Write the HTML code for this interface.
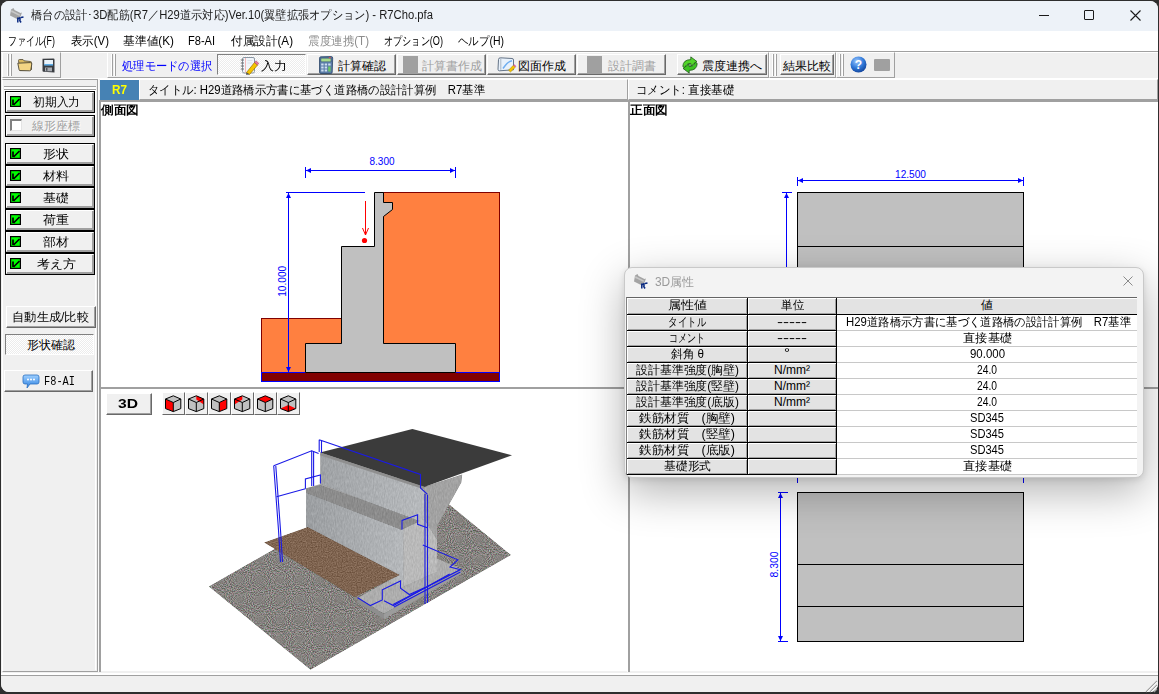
<!DOCTYPE html>
<html><head><meta charset="utf-8"><style>
html,body{margin:0;padding:0;}
body{width:1159px;height:694px;overflow:hidden;background:#2e2e2e;position:relative;font-family:"Liberation Sans",sans-serif;}
.a{position:absolute;}
.t{white-space:nowrap;}
.fit{display:inline-block;white-space:nowrap;transform-origin:0 50%;}
svg{position:absolute;overflow:visible;}
</style></head>
<body>
<div class="a" style="left:1px;top:1px;width:1157px;height:691px;background:#F0F0F0;border-radius:8px;overflow:hidden;"></div>
<div class="a" style="left:1px;top:1px;width:1157px;height:30px;background:#EDF2F8;border-radius:8px 8px 0 0;"></div>
<svg style="left:8px;top:7px" width="16" height="16" viewBox="0 0 16 16"><path d="M3 2.5 L5.5 1 L6.5 3 L12.5 6 L14 5.5 L12.5 9.5 L10 12.5 L2 8.5 Z" fill="#a4a4a4"/><path d="M3.5 3 L6 4.5 L12 7.5 L11.5 9 L5.5 6 L3 5Z" fill="#c8c8c8"/><path d="M9.8 10.5 V15.5 M9.8 11.5 L12.5 11 M12 10 V13 M11.5 13 L13 15.5 M13 10.5 L15.5 10" stroke="#0a2a80" stroke-width="1.5" fill="none"/></svg>
<div class="a t" style="left:31px;top:6px;height:18px;line-height:18px;font-size:12px;color:#1a1a1a;font-weight:400;"><span class="fit" style="--w:402;transform:scaleX(0.9376)">橋台の設計･3D配筋(R7／H29道示対応)Ver.10(翼壁拡張オプション) - R7Cho.pfa</span></div>
<div class="a" style="left:1039px;top:15px;width:10px;height:1px;background:#1a1a1a;"></div>
<div class="a" style="left:1084px;top:10px;width:10px;height:10px;border:1px solid #1a1a1a;box-sizing:border-box;border-radius:1px;"></div>
<svg style="left:1130px;top:10px" width="11" height="11" viewBox="0 0 11 11"><path d="M0.5 0.5 L10.5 10.5 M10.5 0.5 L0.5 10.5" stroke="#1a1a1a" stroke-width="1.1"/></svg>
<div class="a" style="left:1px;top:31px;width:1157px;height:20px;background:#FFFFFF;"></div>
<div class="a t" style="left:8px;top:33px;height:16px;line-height:16px;font-size:12px;color:#000;font-weight:400;"><span class="fit" style="--w:47;transform:scaleX(0.7422)">ファイル(F)</span></div>
<div class="a t" style="left:71px;top:33px;height:16px;line-height:16px;font-size:12px;color:#000;font-weight:400;"><span class="fit" style="--w:38;transform:scaleX(0.9500)">表示(V)</span></div>
<div class="a t" style="left:123px;top:33px;height:16px;line-height:16px;font-size:12px;color:#000;font-weight:400;"><span class="fit" style="--w:51;transform:scaleX(0.9808)">基準値(K)</span></div>
<div class="a t" style="left:188px;top:33px;height:16px;line-height:16px;font-size:12px;color:#000;font-weight:400;"><span class="fit" style="--w:27;transform:scaleX(0.9201)">F8-AI</span></div>
<div class="a t" style="left:231px;top:33px;height:16px;line-height:16px;font-size:12px;color:#000;font-weight:400;"><span class="fit" style="--w:62;transform:scaleX(0.9688)">付属設計(A)</span></div>
<div class="a t" style="left:308px;top:33px;height:16px;line-height:16px;font-size:12px;color:#8c8c8c;font-weight:400;"><span class="fit" style="--w:61;transform:scaleX(0.9632)">震度連携(T)</span></div>
<div class="a t" style="left:384px;top:33px;height:16px;line-height:16px;font-size:12px;color:#000;font-weight:400;"><span class="fit" style="--w:59;transform:scaleX(0.7630)">オプション(O)</span></div>
<div class="a t" style="left:458px;top:33px;height:16px;line-height:16px;font-size:12px;color:#000;font-weight:400;"><span class="fit" style="--w:46;transform:scaleX(0.8733)">ヘルプ(H)</span></div>
<div class="a" style="left:1px;top:51px;width:1157px;height:1px;background:#A0A0A0;"></div>
<div class="a" style="left:1px;top:52px;width:1157px;height:1px;background:#FFFFFF;"></div>
<div class="a" style="left:2px;top:52px;width:59px;height:26px;background:#F0F0F0;border-top:1px solid #FFFFFF;border-left:1px solid #FFFFFF;border-right:1px solid #A0A0A0;border-bottom:1px solid #A0A0A0;box-sizing:border-box;"></div>
<div class="a" style="left:7px;top:54px;width:1px;height:22px;background:#FFFFFF;"></div>
<div class="a" style="left:8px;top:54px;width:1px;height:22px;background:#A0A0A0;"></div>
<div class="a" style="left:10px;top:54px;width:1px;height:22px;background:#FFFFFF;"></div>
<div class="a" style="left:11px;top:54px;width:1px;height:22px;background:#A0A0A0;"></div>
<svg style="left:17px;top:58px" width="16" height="14" viewBox="0 0 16 14">
<path d="M1.5 2.5 Q1.5 1.5 2.5 1.5 L6 1.5 L7 2.8 L13.5 3.5 Q14.5 3.6 14.5 4.6 L14.5 11.5 L3 12.5 Z" fill="#d9b860" stroke="#5f5640" stroke-width="0.9"/>
<path d="M0.8 5.2 L13.2 4.6 Q15.2 4.6 14.8 6 L13.8 12 Q13.6 12.8 12.8 12.8 L3 12.6 Q2.3 12.6 2.1 11.8 Z" fill="#f4d584" stroke="#4a4535" stroke-width="0.9"/>
</svg>
<svg style="left:42px;top:58px" width="13" height="15" viewBox="0 0 13 15">
<path d="M0.5 0.8 L11.5 0.5 Q12.5 0.5 12.5 1.5 L12.5 14.5 L1.5 13.8 Q0.5 13.8 0.5 12.8Z" fill="#3a3d42"/>
<rect x="2.2" y="2" width="8.8" height="5.2" fill="#e9f3fb"/>
<rect x="2.2" y="6.2" width="8.8" height="1.3" fill="#3d9be0"/>
<rect x="3" y="9.5" width="7" height="3.8" fill="#a9adb3"/>
<rect x="4" y="10" width="1.5" height="2.8" fill="#50545a"/>
</svg>
<div class="a" style="left:107px;top:52px;width:662px;height:26px;background:#F0F0F0;border-top:1px solid #FFFFFF;border-left:1px solid #FFFFFF;border-right:1px solid #A0A0A0;border-bottom:1px solid #A0A0A0;box-sizing:border-box;"></div>
<div class="a" style="left:111px;top:54px;width:1px;height:22px;background:#FFFFFF;"></div>
<div class="a" style="left:112px;top:54px;width:1px;height:22px;background:#A0A0A0;"></div>
<div class="a" style="left:114px;top:54px;width:1px;height:22px;background:#FFFFFF;"></div>
<div class="a" style="left:115px;top:54px;width:1px;height:22px;background:#A0A0A0;"></div>
<div class="a t" style="left:122px;top:58px;height:16px;line-height:16px;font-size:12px;color:#0000FF;font-weight:400;"><span class="fit" style="--w:90;transform:scaleX(0.9375)">処理モードの選択</span></div>
<div class="a" style="left:217px;top:54px;width:89px;height:21px;background:#F7F7F7;border-top:1px solid #808080;border-left:1px solid #808080;border-right:1px solid #FFFFFF;border-bottom:1px solid #FFFFFF;box-sizing:border-box;background-image:conic-gradient(#FFFFFF 25%,#ECECEC 0 50%,#FFFFFF 0 75%,#ECECEC 0);background-size:2px 2px;"></div>
<div class="a" style="left:307px;top:54px;width:89px;height:21px;background:#F0F0F0;border-top:1px solid #FFFFFF;border-left:1px solid #FFFFFF;border-right:1px solid #696969;border-bottom:1px solid #696969;box-sizing:border-box;box-shadow:inset -1px -1px 0 #A0A0A0;"></div>
<div class="a" style="left:397px;top:54px;width:89px;height:21px;background:#F0F0F0;border-top:1px solid #FFFFFF;border-left:1px solid #FFFFFF;border-right:1px solid #696969;border-bottom:1px solid #696969;box-sizing:border-box;box-shadow:inset -1px -1px 0 #A0A0A0;"></div>
<div class="a" style="left:487px;top:54px;width:89px;height:21px;background:#F0F0F0;border-top:1px solid #FFFFFF;border-left:1px solid #FFFFFF;border-right:1px solid #696969;border-bottom:1px solid #696969;box-sizing:border-box;box-shadow:inset -1px -1px 0 #A0A0A0;"></div>
<div class="a" style="left:577px;top:54px;width:89px;height:21px;background:#F0F0F0;border-top:1px solid #FFFFFF;border-left:1px solid #FFFFFF;border-right:1px solid #696969;border-bottom:1px solid #696969;box-sizing:border-box;box-shadow:inset -1px -1px 0 #A0A0A0;"></div>
<div class="a" style="left:677px;top:54px;width:90px;height:21px;background:#F0F0F0;border-top:1px solid #FFFFFF;border-left:1px solid #FFFFFF;border-right:1px solid #696969;border-bottom:1px solid #696969;box-sizing:border-box;box-shadow:inset -1px -1px 0 #A0A0A0;"></div>
<svg style="left:240px;top:57px" width="19" height="18" viewBox="0 0 19 18">
<rect x="2.5" y="0.5" width="12" height="15.5" rx="1.5" fill="#f1f5fa" stroke="#8a96a3"/>
<path d="M0.8 3 H4 M0.8 6 H4 M0.8 9 H4 M0.8 12 H4" stroke="#6f6f6f" stroke-width="1"/>
<path d="M5.5 1 V15.5" stroke="#f2a8a8" stroke-width="0.8"/>
<path d="M7.5 3.5 H12.5 M7.5 6 H12.5" stroke="#d5dde6" stroke-width="0.8"/>
<path d="M6.5 15.5 L14.5 5.5 L17.5 8 L9.5 17.5 Z" fill="#f5c400" stroke="#9a7400" stroke-width="0.7"/>
<path d="M14.5 5.5 L16 3.8 L18.8 6.3 L17.5 8Z" fill="#e8789a" stroke="#9a4060" stroke-width="0.5"/>
<path d="M6.5 15.5 L6 17.8 L9.5 17.5Z" fill="#444"/>
</svg>
<div class="a t" style="left:261px;top:58px;height:16px;line-height:16px;font-size:12px;color:#000;font-weight:400;"><span class="fit" style="--w:26;transform:scaleX(1.0833)">入力</span></div>
<svg style="left:318px;top:56px" width="16" height="18" viewBox="0 0 16 18">
<path d="M1.5 2.2 Q1.5 0.8 3 0.8 L13.2 0.5 Q14.7 0.5 14.7 2 L14.2 16.2 Q14.2 17.5 12.8 17.5 L3 17.5 Q1.5 17.5 1.5 16Z" fill="#5a7ca6" stroke="#2a4464" stroke-width="0.8"/>
<path d="M2.5 1.5 H13.5 V6 H2.5Z" fill="#3a5a80"/>
<rect x="3.2" y="2.5" width="9.5" height="3" fill="#a9dc8c"/>
<rect x="10.8" y="1.2" width="2" height="1" fill="#e84848"/>
<g fill="#cfe0f2"><rect x="3.2" y="7.5" width="2.4" height="2"/><rect x="6.7" y="7.5" width="2.4" height="2"/><rect x="10.2" y="7.5" width="2.4" height="2"/>
<rect x="3.2" y="10.5" width="2.4" height="2"/><rect x="6.7" y="10.5" width="2.4" height="2"/><rect x="3.2" y="13.5" width="2.4" height="2"/><rect x="6.7" y="13.5" width="2.4" height="2"/></g>
<rect x="10.2" y="10.5" width="2.4" height="5" fill="#6cc864"/>
</svg>
<div class="a t" style="left:338px;top:58px;height:16px;line-height:16px;font-size:12px;color:#000;font-weight:400;"><span class="fit" style="--w:48;transform:scaleX(1.0000)">計算確認</span></div>
<div class="a" style="left:403px;top:56px;width:15px;height:17px;background:#A0A0A0;"></div>
<div class="a t" style="left:422px;top:58px;height:16px;line-height:16px;font-size:12px;color:#A0A0A0;font-weight:400;"><span class="fit" style="--w:60;transform:scaleX(1.0000)">計算書作成</span></div>
<svg style="left:497px;top:57px" width="20" height="15" viewBox="0 0 20 15">
<path d="M1.5 2.5 Q1.5 0.8 3.5 0.8 L15 1.5 Q16.5 1.5 16.5 3 L16.5 12.8 L2.5 13.8 Q1 13.8 1 12.3 Z" fill="#e8f1fb" stroke="#55657a" stroke-width="0.9"/>
<path d="M3.8 1 V12.8" stroke="#a9b6c4" stroke-width="1"/>
<path d="M6 11.5 Q8.5 8 10 6.5 Q12 4.5 15 3.8" stroke="#70aef0" stroke-width="1.5" fill="none"/>
<path d="M11.5 13.2 L16.3 8.3 L18.3 10.3 L13.5 15 Z" fill="#f5c400" stroke="#9a7a00" stroke-width="0.5"/>
<path d="M16.3 8.3 L17.3 7.3 L19.3 9.3 L18.3 10.3Z" fill="#e060a0"/>
</svg>
<div class="a t" style="left:518px;top:58px;height:16px;line-height:16px;font-size:12px;color:#000;font-weight:400;"><span class="fit" style="--w:48;transform:scaleX(1.0000)">図面作成</span></div>
<div class="a" style="left:587px;top:56px;width:15px;height:17px;background:#A0A0A0;"></div>
<div class="a t" style="left:608px;top:58px;height:16px;line-height:16px;font-size:12px;color:#A0A0A0;font-weight:400;"><span class="fit" style="--w:48;transform:scaleX(1.0000)">設計調書</span></div>
<svg style="left:681px;top:56px" width="18" height="18" viewBox="0 0 18 18">
<path d="M1.8 10.5 Q2 3.8 9.8 3.6 L9.8 0.9 L16 5.6 L9.8 10.2 L9.8 7.4 Q5.2 7.4 3.8 11.8 Z" fill="#52d62a" stroke="#1d5418" stroke-width="0.8" stroke-linejoin="round"/>
<path d="M16.2 7.5 Q16 14.2 8.2 14.4 L8.2 17.1 L2 12.4 L8.2 7.8 L8.2 10.6 Q12.8 10.6 14.2 6.2 Z" fill="#3cc422" stroke="#1d5418" stroke-width="0.8" stroke-linejoin="round"/>
</svg>
<div class="a t" style="left:702px;top:58px;height:16px;line-height:16px;font-size:12px;color:#000;font-weight:400;"><span class="fit" style="--w:60;transform:scaleX(1.0000)">震度連携へ</span></div>
<div class="a" style="left:769px;top:52px;width:67px;height:26px;background:#F0F0F0;border-top:1px solid #FFFFFF;border-left:1px solid #FFFFFF;border-right:1px solid #A0A0A0;border-bottom:1px solid #A0A0A0;box-sizing:border-box;"></div>
<div class="a" style="left:772px;top:54px;width:1px;height:22px;background:#FFFFFF;"></div>
<div class="a" style="left:773px;top:54px;width:1px;height:22px;background:#A0A0A0;"></div>
<div class="a" style="left:775px;top:54px;width:1px;height:22px;background:#FFFFFF;"></div>
<div class="a" style="left:776px;top:54px;width:1px;height:22px;background:#A0A0A0;"></div>
<div class="a" style="left:780px;top:54px;width:54px;height:21px;background:#F0F0F0;border-top:1px solid #FFFFFF;border-left:1px solid #FFFFFF;border-right:1px solid #696969;border-bottom:1px solid #696969;box-sizing:border-box;box-shadow:inset -1px -1px 0 #A0A0A0;"></div>
<div class="a t" style="left:783px;top:58px;height:16px;line-height:16px;font-size:12px;color:#000;font-weight:400;"><span class="fit" style="--w:48;transform:scaleX(1.0000)">結果比較</span></div>
<div class="a" style="left:836px;top:52px;width:59px;height:26px;background:#F0F0F0;border-top:1px solid #FFFFFF;border-left:1px solid #FFFFFF;border-right:1px solid #A0A0A0;border-bottom:1px solid #A0A0A0;box-sizing:border-box;"></div>
<div class="a" style="left:839px;top:54px;width:1px;height:22px;background:#FFFFFF;"></div>
<div class="a" style="left:840px;top:54px;width:1px;height:22px;background:#A0A0A0;"></div>
<div class="a" style="left:842px;top:54px;width:1px;height:22px;background:#FFFFFF;"></div>
<div class="a" style="left:843px;top:54px;width:1px;height:22px;background:#A0A0A0;"></div>
<svg style="left:850px;top:56px" width="17" height="17" viewBox="0 0 17 17">
<defs><radialGradient id="hg" cx="40%" cy="30%" r="70%"><stop offset="0" stop-color="#9cc8ff"/><stop offset="0.6" stop-color="#2f78d8"/><stop offset="1" stop-color="#1548a0"/></radialGradient></defs>
<circle cx="8.5" cy="8.5" r="8" fill="url(#hg)"/>
<text x="8.5" y="13" text-anchor="middle" font-family="Liberation Sans" font-weight="700" font-size="12" fill="#fff">?</text>
</svg>
<div class="a" style="left:874px;top:59px;width:16px;height:12px;background:#A0A0A0;border-radius:1px;"></div>
<div class="a" style="left:1px;top:78px;width:1157px;height:1px;background:#FFFFFF;"></div>
<div class="a" style="left:100px;top:79px;width:39px;height:1px;background:#FFFFFF;"></div>
<div class="a" style="left:100px;top:80px;width:39px;height:20px;background:#4682B4;"></div>
<div class="a t" style="left:112px;top:82px;height:16px;line-height:16px;font-size:12px;color:#FFFF00;font-weight:700;"><span class="fit" style="--w:15;transform:scaleX(0.9776)">R7</span></div>
<div class="a" style="left:139px;top:79px;width:489px;height:21px;background:#F0F0F0;border-top:1px solid #FFFFFF;border-left:1px solid #FFFFFF;border-right:1px solid #A0A0A0;border-bottom:1px solid #A0A0A0;box-sizing:border-box;"></div>
<div class="a t" style="left:148px;top:82px;height:16px;line-height:16px;font-size:12px;color:#000;font-weight:400;"><span class="fit" style="--w:337;transform:scaleX(0.9465)">タイトル: H29道路橋示方書に基づく道路橋の設計計算例　R7基準</span></div>
<div class="a" style="left:628px;top:79px;width:530px;height:21px;background:#F0F0F0;border-top:1px solid #FFFFFF;border-left:1px solid #FFFFFF;border-right:1px solid #A0A0A0;border-bottom:1px solid #A0A0A0;box-sizing:border-box;"></div>
<div class="a t" style="left:636px;top:82px;height:16px;line-height:16px;font-size:12px;color:#000;font-weight:400;"><span class="fit" style="--w:98;transform:scaleX(0.9545)">コメント: 直接基礎</span></div>
<div class="a" style="left:2px;top:79px;width:96px;height:593px;background:#F0F0F0;border-top:1px solid #A0A0A0;border-left:1px solid #FFFFFF;border-right:1px solid #A0A0A0;border-bottom:1px solid #A0A0A0;box-sizing:border-box;"></div>
<div class="a" style="left:95px;top:90px;width:1px;height:580px;background:#FFFFFF;"></div>
<div class="a" style="left:98px;top:79px;width:1px;height:593px;background:#FAFAFA;"></div>
<div class="a" style="left:4px;top:86px;width:92px;height:1px;background:#A0A0A0;"></div>
<div class="a" style="left:4px;top:87px;width:92px;height:2px;background:#FFFFFF;"></div>
<div class="a" style="left:4px;top:89px;width:92px;height:1px;background:#A0A0A0;"></div>
<div class="a" style="left:4px;top:90px;width:92px;height:1px;background:#FFFFFF;"></div>
<div class="a" style="left:5px;top:91px;width:90px;height:22px;background:#000;"></div>
<div class="a" style="left:6px;top:92px;width:88px;height:20px;background:#F0F0F0;border-top:1px solid #FFFFFF;border-left:1px solid #FFFFFF;border-right:1px solid #A0A0A0;border-bottom:1px solid #A0A0A0;box-sizing:border-box;box-shadow:inset -1px -1px 0 #A0A0A0;"></div>
<svg style="left:10px;top:96px" width="11" height="11" viewBox="0 0 11 11"><rect x="0.6" y="0.6" width="9.8" height="9.8" fill="#00FF00" stroke="#000" stroke-width="1.2"/><path d="M3 3.5 V9 M3.5 9 L9.5 3" stroke="#000" stroke-width="1.7" fill="none"/></svg>
<div class="a t" style="left:33px;top:94px;height:16px;line-height:16px;font-size:12px;color:#000;font-weight:400;"><span class="fit" style="--w:47;transform:scaleX(0.9792)">初期入力</span></div>
<div class="a" style="left:5px;top:115px;width:90px;height:22px;background:#000;"></div>
<div class="a" style="left:6px;top:116px;width:88px;height:20px;background:#F0F0F0;border-top:1px solid #FFFFFF;border-left:1px solid #FFFFFF;border-right:1px solid #A0A0A0;border-bottom:1px solid #A0A0A0;box-sizing:border-box;box-shadow:inset -1px -1px 0 #A0A0A0;"></div>
<div class="a" style="left:10px;top:119px;width:12px;height:12px;background:#FFFFFF;border-top:2px solid #808080;border-left:2px solid #808080;border-right:1px solid #E3E3E3;border-bottom:1px solid #E3E3E3;box-sizing:border-box;"></div>
<div class="a t" style="left:32px;top:118px;height:16px;line-height:16px;font-size:12px;color:#A0A0A0;font-weight:400;text-shadow:1px 1px 0 #fff;"><span class="fit" style="--w:48;transform:scaleX(1.0000)">線形座標</span></div>
<div class="a" style="left:5px;top:143px;width:90px;height:22px;background:#000;"></div>
<div class="a" style="left:6px;top:144px;width:88px;height:20px;background:#F0F0F0;border-top:1px solid #FFFFFF;border-left:1px solid #FFFFFF;border-right:1px solid #A0A0A0;border-bottom:1px solid #A0A0A0;box-sizing:border-box;box-shadow:inset -1px -1px 0 #A0A0A0;"></div>
<svg style="left:10px;top:148px" width="11" height="11" viewBox="0 0 11 11"><rect x="0.6" y="0.6" width="9.8" height="9.8" fill="#00FF00" stroke="#000" stroke-width="1.2"/><path d="M3 3.5 V9 M3.5 9 L9.5 3" stroke="#000" stroke-width="1.7" fill="none"/></svg>
<div class="a t" style="left:43px;top:146px;height:16px;line-height:16px;font-size:12px;color:#000;font-weight:400;"><span class="fit" style="--w:26;transform:scaleX(1.0833)">形状</span></div>
<div class="a" style="left:5px;top:165px;width:90px;height:22px;background:#000;"></div>
<div class="a" style="left:6px;top:166px;width:88px;height:20px;background:#F0F0F0;border-top:1px solid #FFFFFF;border-left:1px solid #FFFFFF;border-right:1px solid #A0A0A0;border-bottom:1px solid #A0A0A0;box-sizing:border-box;box-shadow:inset -1px -1px 0 #A0A0A0;"></div>
<svg style="left:10px;top:170px" width="11" height="11" viewBox="0 0 11 11"><rect x="0.6" y="0.6" width="9.8" height="9.8" fill="#00FF00" stroke="#000" stroke-width="1.2"/><path d="M3 3.5 V9 M3.5 9 L9.5 3" stroke="#000" stroke-width="1.7" fill="none"/></svg>
<div class="a t" style="left:43px;top:168px;height:16px;line-height:16px;font-size:12px;color:#000;font-weight:400;"><span class="fit" style="--w:26;transform:scaleX(1.0833)">材料</span></div>
<div class="a" style="left:5px;top:187px;width:90px;height:22px;background:#000;"></div>
<div class="a" style="left:6px;top:188px;width:88px;height:20px;background:#F0F0F0;border-top:1px solid #FFFFFF;border-left:1px solid #FFFFFF;border-right:1px solid #A0A0A0;border-bottom:1px solid #A0A0A0;box-sizing:border-box;box-shadow:inset -1px -1px 0 #A0A0A0;"></div>
<svg style="left:10px;top:192px" width="11" height="11" viewBox="0 0 11 11"><rect x="0.6" y="0.6" width="9.8" height="9.8" fill="#00FF00" stroke="#000" stroke-width="1.2"/><path d="M3 3.5 V9 M3.5 9 L9.5 3" stroke="#000" stroke-width="1.7" fill="none"/></svg>
<div class="a t" style="left:43px;top:190px;height:16px;line-height:16px;font-size:12px;color:#000;font-weight:400;"><span class="fit" style="--w:26;transform:scaleX(1.0833)">基礎</span></div>
<div class="a" style="left:5px;top:209px;width:90px;height:22px;background:#000;"></div>
<div class="a" style="left:6px;top:210px;width:88px;height:20px;background:#F0F0F0;border-top:1px solid #FFFFFF;border-left:1px solid #FFFFFF;border-right:1px solid #A0A0A0;border-bottom:1px solid #A0A0A0;box-sizing:border-box;box-shadow:inset -1px -1px 0 #A0A0A0;"></div>
<svg style="left:10px;top:214px" width="11" height="11" viewBox="0 0 11 11"><rect x="0.6" y="0.6" width="9.8" height="9.8" fill="#00FF00" stroke="#000" stroke-width="1.2"/><path d="M3 3.5 V9 M3.5 9 L9.5 3" stroke="#000" stroke-width="1.7" fill="none"/></svg>
<div class="a t" style="left:43px;top:212px;height:16px;line-height:16px;font-size:12px;color:#000;font-weight:400;"><span class="fit" style="--w:26;transform:scaleX(1.0833)">荷重</span></div>
<div class="a" style="left:5px;top:231px;width:90px;height:22px;background:#000;"></div>
<div class="a" style="left:6px;top:232px;width:88px;height:20px;background:#F0F0F0;border-top:1px solid #FFFFFF;border-left:1px solid #FFFFFF;border-right:1px solid #A0A0A0;border-bottom:1px solid #A0A0A0;box-sizing:border-box;box-shadow:inset -1px -1px 0 #A0A0A0;"></div>
<svg style="left:10px;top:236px" width="11" height="11" viewBox="0 0 11 11"><rect x="0.6" y="0.6" width="9.8" height="9.8" fill="#00FF00" stroke="#000" stroke-width="1.2"/><path d="M3 3.5 V9 M3.5 9 L9.5 3" stroke="#000" stroke-width="1.7" fill="none"/></svg>
<div class="a t" style="left:43px;top:234px;height:16px;line-height:16px;font-size:12px;color:#000;font-weight:400;"><span class="fit" style="--w:26;transform:scaleX(1.0833)">部材</span></div>
<div class="a" style="left:5px;top:253px;width:90px;height:22px;background:#000;"></div>
<div class="a" style="left:6px;top:254px;width:88px;height:20px;background:#F0F0F0;border-top:1px solid #FFFFFF;border-left:1px solid #FFFFFF;border-right:1px solid #A0A0A0;border-bottom:1px solid #A0A0A0;box-sizing:border-box;box-shadow:inset -1px -1px 0 #A0A0A0;"></div>
<svg style="left:10px;top:258px" width="11" height="11" viewBox="0 0 11 11"><rect x="0.6" y="0.6" width="9.8" height="9.8" fill="#00FF00" stroke="#000" stroke-width="1.2"/><path d="M3 3.5 V9 M3.5 9 L9.5 3" stroke="#000" stroke-width="1.7" fill="none"/></svg>
<div class="a t" style="left:37px;top:256px;height:16px;line-height:16px;font-size:12px;color:#000;font-weight:400;"><span class="fit" style="--w:39;transform:scaleX(1.0833)">考え方</span></div>
<div class="a" style="left:6px;top:306px;width:90px;height:22px;background:#F0F0F0;border-top:1px solid #FFFFFF;border-left:1px solid #FFFFFF;border-right:1px solid #696969;border-bottom:1px solid #696969;box-sizing:border-box;box-shadow:inset -1px -1px 0 #A0A0A0;"></div>
<div class="a t" style="left:12px;top:309px;height:16px;line-height:16px;font-size:12px;color:#000;font-weight:400;"><span class="fit" style="--w:77;transform:scaleX(1.0220)">自動生成/比較</span></div>
<div class="a" style="left:5px;top:334px;width:89px;height:21px;border-top:1px solid #808080;border-left:1px solid #808080;border-right:1px solid #FFFFFF;border-bottom:1px solid #FFFFFF;box-sizing:border-box;background-image:conic-gradient(#FFFFFF 25%,#ECECEC 0 50%,#FFFFFF 0 75%,#ECECEC 0);background-size:2px 2px;"></div>
<div class="a t" style="left:27px;top:337px;height:16px;line-height:16px;font-size:12px;color:#000;font-weight:400;"><span class="fit" style="--w:48;transform:scaleX(1.0000)">形状確認</span></div>
<div class="a" style="left:4px;top:370px;width:89px;height:22px;background:#F0F0F0;border-top:1px solid #FFFFFF;border-left:1px solid #FFFFFF;border-right:1px solid #696969;border-bottom:1px solid #696969;box-sizing:border-box;box-shadow:inset -1px -1px 0 #A0A0A0;"></div>
<svg style="left:22px;top:374px" width="18" height="15" viewBox="0 0 18 15">
<defs><linearGradient id="bb" x1="0" y1="0" x2="0" y2="1"><stop offset="0" stop-color="#9fd0ff"/><stop offset="1" stop-color="#2a7fe0"/></linearGradient></defs>
<path d="M3 1 H15 Q17 1 17 3 V8 Q17 10 15 10 H8 L5 14 L5.5 10 H3 Q1 10 1 8 V3 Q1 1 3 1Z" fill="url(#bb)" stroke="#2a6fc0" stroke-width="0.8"/>
<circle cx="6" cy="5.5" r="1" fill="#fff"/><circle cx="9" cy="5.5" r="1" fill="#fff"/><circle cx="12" cy="5.5" r="1" fill="#fff"/>
</svg>
<div class="a t" style="left:44px;top:374px;height:16px;line-height:16px;font-size:12px;color:#000;font-weight:400;font-family:'Liberation Mono',monospace;"><span class="fit" style="--w:31;transform:scaleX(0.8607)">F8-AI</span></div>
<div class="a" style="left:99px;top:100px;width:1059px;height:2px;background:#A0A0A0;"></div>
<div class="a" style="left:99px;top:100px;width:2px;height:572px;background:#A0A0A0;"></div>
<div class="a" style="left:101px;top:102px;width:526px;height:285px;background:#FFFFFF;"></div>
<div class="a" style="left:101px;top:389px;width:526px;height:282px;background:#FFFFFF;"></div>
<div class="a" style="left:99px;top:387px;width:529px;height:2px;background:#A0A0A0;"></div>
<div class="a" style="left:627px;top:102px;width:1px;height:570px;background:#FFFFFF;"></div>
<div class="a" style="left:628px;top:100px;width:2px;height:572px;background:#A0A0A0;"></div>
<div class="a" style="left:630px;top:102px;width:528px;height:285px;background:#FFFFFF;"></div>
<div class="a" style="left:630px;top:389px;width:528px;height:282px;background:#FFFFFF;"></div>
<div class="a" style="left:630px;top:387px;width:528px;height:2px;background:#A0A0A0;"></div>
<div class="a t" style="left:101px;top:103px;height:14px;line-height:14px;font-size:12px;color:#000;font-weight:700;"><span class="fit" style="--w:38;transform:scaleX(1.0556)">側面図</span></div>
<div class="a t" style="left:630px;top:103px;height:14px;line-height:14px;font-size:12px;color:#000;font-weight:700;"><span class="fit" style="--w:38;transform:scaleX(1.0556)">正面図</span></div>
<svg style="left:0;top:0" width="1159" height="694" viewBox="0 0 1159 694">
<defs>
<filter id="nz" x="0" y="0" width="100%" height="100%"><feTurbulence type="fractalNoise" baseFrequency="0.9" numOctaves="2" seed="3"/><feColorMatrix values="0 0 0 0 0.5  0 0 0 0 0.5  0 0 0 0 0.5  0 0 0 1.6 -0.55"/><feComposite in2="SourceGraphic" operator="in"/></filter>
</defs>
<!-- side view -->
<rect x="383.5" y="192.5" width="116" height="180" fill="#FF8040" stroke="#800000" stroke-width="1"/>
<rect x="261.5" y="318.5" width="80" height="54" fill="#FF8040" stroke="#800000" stroke-width="1"/>
<rect x="261.5" y="372.5" width="238" height="9" fill="#800000" stroke="#0000FF" stroke-width="1"/>
<path d="M374.5 192.5 H383.5 V202.5 H392.5 V209.5 L383.5 216.5 V343.5 H455.5 V372.5 H305.5 V343.5 H341.5 V246.5 H374.5 Z" fill="#C0C0C0" stroke="#000" stroke-width="1"/>
<path d="M305.5 170.5 H455.5 M305.5 167 V178 M455.5 167 V178 " stroke="#0000FF" stroke-width="1" fill="none"/><path d="M306 170.5 L311 168 V173Z M455 170.5 L450 168 V173Z" fill="#0000FF"/>
<path d="M286 192.5 H365 M288.5 192.5 V372.5 " stroke="#0000FF" stroke-width="1" fill="none"/><path d="M288.5 193 L286 198 H291Z M288.5 372 L286 367 H291Z" fill="#0000FF"/>
<text x="382" y="165" text-anchor="middle" font-family="Liberation Sans" font-size="11" fill="#0000FF" textLength="25" lengthAdjust="spacingAndGlyphs">8.300</text>
<text transform="translate(286.2,281.3) rotate(-90)" text-anchor="middle" font-family="Liberation Sans" font-size="11" fill="#0000FF" textLength="31" lengthAdjust="spacingAndGlyphs">10.000</text>
<path d="M365.5 201 V235 M365.5 235 L362.5 228 M365.5 235 L368.5 228" stroke="#FF0000" stroke-width="1" fill="none"/>
<circle cx="364.5" cy="240.5" r="2.6" fill="#FF0000"/>

<!-- front view (top right) -->
<rect x="797.5" y="192.5" width="226" height="200" fill="#C0C0C0" stroke="#000" stroke-width="1"/>
<path d="M797.5 246.5 H1023.5" stroke="#000"/>
<path d="M797.5 180.5 H1023.5 M797.5 177 V186 M1023.5 177 V186 " stroke="#0000FF" fill="none"/><path d="M798 180.5 L803 178 V183Z M1023 180.5 L1018 178 V183Z" fill="#0000FF"/>
<text x="910.5" y="178" text-anchor="middle" font-family="Liberation Sans" font-size="11" fill="#0000FF" textLength="31" lengthAdjust="spacingAndGlyphs">12.500</text>
<path d="M786.5 193 V380 M782 192.5 H792 " stroke="#0000FF" fill="none"/><path d="M786.5 193 L784 198 H789Z" fill="#0000FF"/>

<!-- bottom right view -->
<rect x="797.5" y="492.5" width="226" height="149" fill="#C0C0C0" stroke="#000" stroke-width="1"/>
<path d="M797.5 564.5 H1023.5 M797.5 606.5 H1023.5" stroke="#000"/>
<path d="M780.5 493 V642 M778 492.5 H788 M778 641.5 H788 M797.5 478 V483 M1023.5 478 V483" stroke="#0000FF" fill="none"/><path d="M780.5 493 L778 498 H783Z M780.5 641 L778 636 H783Z" fill="#0000FF"/>
<text transform="translate(777.5,564.5) rotate(-90)" text-anchor="middle" font-family="Liberation Sans" font-size="11" fill="#0000FF" textLength="26" lengthAdjust="spacingAndGlyphs">8.300</text>
</svg>
<div class="a" style="left:106px;top:393px;width:46px;height:22px;background:#F0F0F0;border-top:1px solid #FFFFFF;border-left:1px solid #FFFFFF;border-right:1px solid #696969;border-bottom:1px solid #696969;box-sizing:border-box;box-shadow:inset -1px -1px 0 #A0A0A0;"></div>
<div class="a t" style="left:118px;top:396px;height:16px;line-height:16px;font-size:12px;color:#000;font-weight:700;"><span class="fit" style="--w:20;transform:scaleX(1.3035)">3D</span></div>
<div class="a" style="left:162px;top:392px;width:23px;height:23px;background:#F0F0F0;border-top:1px solid #FFFFFF;border-left:1px solid #FFFFFF;border-right:1px solid #696969;border-bottom:1px solid #696969;box-sizing:border-box;"></div>
<svg style="left:163px;top:393px" width="21" height="21" viewBox="0 0 21 21"><path d="M2.5 6 L10.3 9.5 V18.6 L2.5 15.6Z" fill="#FF0000"/><path d="M10.3 9.5 L17.8 6 V15.6 L10.3 18.6Z" fill="#C0C0C0"/><path d="M2.5 6 L10.3 2.8 L17.8 6 L10.3 9.5Z" fill="#C0C0C0"/><path d="M2.5 6 L10.3 2.8 L17.8 6 V15.6 L10.3 18.6 L2.5 15.6Z M2.5 6 L10.3 9.5 L17.8 6 M10.3 9.5 V18.6" stroke="#000" stroke-width="1" fill="none" stroke-linejoin="round"/></svg>
<div class="a" style="left:185px;top:392px;width:23px;height:23px;background:#F0F0F0;border-top:1px solid #FFFFFF;border-left:1px solid #FFFFFF;border-right:1px solid #696969;border-bottom:1px solid #696969;box-sizing:border-box;"></div>
<svg style="left:186px;top:393px" width="21" height="21" viewBox="0 0 21 21"><path d="M2.5 6 L10.3 9.5 V18.6 L2.5 15.6Z" fill="#C0C0C0"/><path d="M10.3 9.5 L17.8 6 V15.6 L10.3 18.6Z" fill="#C0C0C0"/><path d="M2.5 6 L10.3 2.8 L17.8 6 L10.3 9.5Z" fill="#C0C0C0"/><path d="M10.3 2.8 L17.8 6 V11.6 L10.3 6.5Z" fill="#FF0000"/><path d="M2.5 6 L10.3 2.8 L17.8 6 V15.6 L10.3 18.6 L2.5 15.6Z M2.5 6 L10.3 9.5 L17.8 6 M10.3 9.5 V18.6" stroke="#000" stroke-width="1" fill="none" stroke-linejoin="round"/></svg>
<div class="a" style="left:208px;top:392px;width:23px;height:23px;background:#F0F0F0;border-top:1px solid #FFFFFF;border-left:1px solid #FFFFFF;border-right:1px solid #696969;border-bottom:1px solid #696969;box-sizing:border-box;"></div>
<svg style="left:209px;top:393px" width="21" height="21" viewBox="0 0 21 21"><path d="M2.5 6 L10.3 9.5 V18.6 L2.5 15.6Z" fill="#C0C0C0"/><path d="M10.3 9.5 L17.8 6 V15.6 L10.3 18.6Z" fill="#FF0000"/><path d="M2.5 6 L10.3 2.8 L17.8 6 L10.3 9.5Z" fill="#C0C0C0"/><path d="M2.5 6 L10.3 2.8 L17.8 6 V15.6 L10.3 18.6 L2.5 15.6Z M2.5 6 L10.3 9.5 L17.8 6 M10.3 9.5 V18.6" stroke="#000" stroke-width="1" fill="none" stroke-linejoin="round"/></svg>
<div class="a" style="left:231px;top:392px;width:23px;height:23px;background:#F0F0F0;border-top:1px solid #FFFFFF;border-left:1px solid #FFFFFF;border-right:1px solid #696969;border-bottom:1px solid #696969;box-sizing:border-box;"></div>
<svg style="left:232px;top:393px" width="21" height="21" viewBox="0 0 21 21"><path d="M2.5 6 L10.3 9.5 V18.6 L2.5 15.6Z" fill="#C0C0C0"/><path d="M10.3 9.5 L17.8 6 V15.6 L10.3 18.6Z" fill="#C0C0C0"/><path d="M2.5 6 L10.3 2.8 L17.8 6 L10.3 9.5Z" fill="#C0C0C0"/><path d="M2.5 6 L10.3 2.8 V6.5 L2.5 11.6Z" fill="#FF0000"/><path d="M2.5 6 L10.3 2.8 L17.8 6 V15.6 L10.3 18.6 L2.5 15.6Z M2.5 6 L10.3 9.5 L17.8 6 M10.3 9.5 V18.6" stroke="#000" stroke-width="1" fill="none" stroke-linejoin="round"/></svg>
<div class="a" style="left:254px;top:392px;width:23px;height:23px;background:#F0F0F0;border-top:1px solid #FFFFFF;border-left:1px solid #FFFFFF;border-right:1px solid #696969;border-bottom:1px solid #696969;box-sizing:border-box;"></div>
<svg style="left:255px;top:393px" width="21" height="21" viewBox="0 0 21 21"><path d="M2.5 6 L10.3 9.5 V18.6 L2.5 15.6Z" fill="#C0C0C0"/><path d="M10.3 9.5 L17.8 6 V15.6 L10.3 18.6Z" fill="#C0C0C0"/><path d="M2.5 6 L10.3 2.8 L17.8 6 L10.3 9.5Z" fill="#FF0000"/><path d="M2.5 6 L10.3 2.8 L17.8 6 V15.6 L10.3 18.6 L2.5 15.6Z M2.5 6 L10.3 9.5 L17.8 6 M10.3 9.5 V18.6" stroke="#000" stroke-width="1" fill="none" stroke-linejoin="round"/></svg>
<div class="a" style="left:277px;top:392px;width:23px;height:23px;background:#F0F0F0;border-top:1px solid #FFFFFF;border-left:1px solid #FFFFFF;border-right:1px solid #696969;border-bottom:1px solid #696969;box-sizing:border-box;"></div>
<svg style="left:278px;top:393px" width="21" height="21" viewBox="0 0 21 21"><path d="M2.5 6 L10.3 9.5 V18.6 L2.5 15.6Z" fill="#C0C0C0"/><path d="M10.3 9.5 L17.8 6 V15.6 L10.3 18.6Z" fill="#C0C0C0"/><path d="M2.5 6 L10.3 2.8 L17.8 6 L10.3 9.5Z" fill="#C0C0C0"/><path d="M2.5 15.6 L10.3 12.1 L17.8 15.6 L10.3 18.6Z" fill="#FF0000"/><path d="M2.5 6 L10.3 2.8 L17.8 6 V15.6 L10.3 18.6 L2.5 15.6Z M2.5 6 L10.3 9.5 L17.8 6 M10.3 9.5 V18.6" stroke="#000" stroke-width="1" fill="none" stroke-linejoin="round"/></svg>
<svg style="left:0;top:0" width="1159" height="694" viewBox="0 0 1159 694">
<defs>
<filter id="gn" x="0" y="0" width="100%" height="100%" color-interpolation-filters="sRGB"><feTurbulence type="fractalNoise" baseFrequency="0.95" numOctaves="1" seed="7" result="t"/><feColorMatrix in="t" values="1.3 -0.5 0 0 0.1  1.3 0.4 0 0 -0.35  1.3 0 0.5 0 -0.4  0 0 0 0 1" result="c"/><feComposite in="c" in2="SourceGraphic" operator="arithmetic" k1="0" k2="0.5" k3="1" k4="-0.25" result="m"/><feComposite in="m" in2="SourceGraphic" operator="in"/></filter>
<filter id="sn" x="0" y="0" width="100%" height="100%" color-interpolation-filters="sRGB"><feTurbulence type="fractalNoise" baseFrequency="0.8" numOctaves="1" seed="11" result="t"/><feColorMatrix in="t" values="1.5 0 0 0 -0.25  1.5 0 0 0 -0.25  1.5 0 0 0 -0.25  0 0 0 0 1" result="c"/><feComposite in="c" in2="SourceGraphic" operator="arithmetic" k1="0" k2="0.22" k3="1" k4="-0.11" result="m"/><feComposite in="m" in2="SourceGraphic" operator="in"/></filter>
<filter id="cn" x="0" y="0" width="100%" height="100%" color-interpolation-filters="sRGB"><feTurbulence type="fractalNoise" baseFrequency="0.9 0.25" numOctaves="2" seed="2" result="t"/><feColorMatrix in="t" values="1 0 0 0 0  1 0 0 0 0  1 0 0 0 0  0 0 0 0 1" result="c"/><feComposite in="c" in2="SourceGraphic" operator="arithmetic" k1="0" k2="0.14" k3="1" k4="-0.07" result="m"/><feComposite in="m" in2="SourceGraphic" operator="in"/></filter>
<linearGradient id="cg1" x1="0" y1="0" x2="1" y2="0"><stop offset="0" stop-color="#9fa2a5"/><stop offset="1" stop-color="#b7babd"/></linearGradient>
<linearGradient id="cg2" x1="0" y1="0" x2="1" y2="0"><stop offset="0" stop-color="#9b9ea1"/><stop offset="1" stop-color="#b5b8bb"/></linearGradient>
</defs>
<polygon points="208.9,586.4 310.5,669.7 511,555 409.5,472" fill="#85827f" filter="url(#gn)"/>
<polygon points="306.2,488.2 320.4,484.1 320.4,452.6 424.2,487 462.2,474.4 461.3,482.5 437,526 437,572 403.6,588 306,548" fill="#a8a8a8"/>
<polygon points="357.7,597.7 432,556 461,569 384,614" fill="#adadad" filter="url(#cn)"/>
<polygon points="357.7,597.7 384,614 384,619 357.7,603" fill="#8e8e8e"/>
<polygon points="384,614 461,569 461,574 384,619" fill="#9c9c9c"/>
<polygon points="401,527 437,508 437,572 401,588" fill="#b9b9b9" filter="url(#cn)"/>
<polygon points="306,488.2 403.6,527 403.6,588 306,548" fill="url(#cg2)" filter="url(#cn)"/>
<polygon points="264,542.6 307.7,527 400,575 354.6,597.3" fill="#7f6450" filter="url(#sn)"/>
<polygon points="306.2,488.2 320.4,485 418.3,519.5 418.3,522 401.4,529.9 306.2,493" fill="#8c8c8c" filter="url(#cn)"/>
<polygon points="320.4,452.6 424.2,487 424.2,519.5 418.3,520.8 320.4,484.1" fill="url(#cg1)" filter="url(#cn)"/>
<polygon points="424.2,487 462.2,474.4 461.3,482.5 437,526 437,540 424.2,519.5" fill="#a2a2a2" filter="url(#cn)"/>
<polygon points="320,452.6 412.4,429 512,455.3 424.2,487" fill="#3b3b3b"/>
<path d="M320.5 454 L424 488" stroke="#8f8f8f" stroke-width="2.4"/>
<g stroke="#1a1ae6" stroke-width="1.1" fill="none">
<path d="M273.7 465.8 L311.7 450.8 L318.6 453.6 M273.7 465.8 L278.5 530 L280.5 562 M275.8 466 L280.5 530 L282.5 562"/>
<path d="M311.7 450.8 V486 M313.6 451 V486 M276.5 496.7 L305.4 488.8 M305.4 488.8 V479 L320.4 475 V483.6"/>
<path d="M319.2 439.8 V452 M321.5 440.5 V453 M319.2 439.8 L420.5 474.4 V488 L427.5 494.3"/>
<path d="M425 494 V604 M427.5 495 V603"/>
<path d="M402 529.4 V520.4 L417.6 514.7 V524.3 L428 528"/>
<path d="M422.8 545 L457.8 559.8 L450 567 L460.4 569.6 L393 604.6 M460.4 572 L394 607"/>
<path d="M357.7 597.7 L370.4 605.6 L382.3 600 V589.8 L400.5 581 V588.2 L409.3 594.5 L425 587.4"/>
<path d="M384 600.8 L393.4 605.6 L449.7 574"/>
</g>
</svg>
<div class="a" style="left:624px;top:267px;width:520px;height:211px;background:#F3F3F3;border:1px solid #C9C9C9;box-sizing:border-box;border-radius:8px;box-shadow:0 14px 44px rgba(0,0,0,0.30),0 2px 6px rgba(0,0,0,0.10);"></div>
<svg style="left:632px;top:273px" width="16" height="16" viewBox="0 0 16 16"><path d="M3 2.5 L5.5 1 L6.5 3 L12.5 6 L14 5.5 L12.5 9.5 L10 12.5 L2 8.5 Z" fill="#a4a4a4"/><path d="M3.5 3 L6 4.5 L12 7.5 L11.5 9 L5.5 6 L3 5Z" fill="#c8c8c8"/><path d="M9.8 10.5 V15.5 M9.8 11.5 L12.5 11 M12 10 V13 M11.5 13 L13 15.5 M13 10.5 L15.5 10" stroke="#0a2a80" stroke-width="1.5" fill="none"/></svg>
<div class="a t" style="left:655px;top:274px;height:16px;line-height:16px;font-size:12px;color:#9A9A9A;font-weight:400;"><span class="fit" style="--w:39;transform:scaleX(0.9913)">3D属性</span></div>
<svg style="left:1123px;top:276px" width="10" height="10" viewBox="0 0 10 10"><path d="M0.5 0.5 L9.5 9.5 M9.5 0.5 L0.5 9.5" stroke="#8a8a8a" stroke-width="1"/></svg>
<div class="a" style="left:626px;top:297px;width:511px;height:178px;background:#FFFFFF;border-top:1px solid #646464;border-left:1px solid #808080;box-sizing:border-box;"></div>
<div class="a" style="left:627px;top:298px;width:121px;height:17px;background:#E3E3E3;border-right:1px solid #000;border-bottom:1px solid #000;box-sizing:border-box;box-shadow:inset 1px 1px 0 #FFFFFF,inset -1px -1px 0 #A0A0A0;"></div>
<div class="a" style="left:748px;top:298px;width:89px;height:17px;background:#E3E3E3;border-right:1px solid #000;border-bottom:1px solid #000;box-sizing:border-box;box-shadow:inset 1px 1px 0 #FFFFFF,inset -1px -1px 0 #A0A0A0;"></div>
<div class="a" style="left:837px;top:298px;width:300px;height:17px;background:#E3E3E3;border-bottom:1px solid #000;box-sizing:border-box;box-shadow:inset 0 1px 0 #FFFFFF;"></div>
<div class="a t" style="left:667.5px;top:297px;height:16px;line-height:16px;font-size:12px;color:#000;font-weight:400;"><span class="fit" style="--w:39;transform:scaleX(1.0833)">属性値</span></div>
<div class="a t" style="left:780.5px;top:297px;height:16px;line-height:16px;font-size:12px;color:#000;font-weight:400;"><span class="fit" style="--w:23;transform:scaleX(0.9583)">単位</span></div>
<div class="a t" style="left:981.0px;top:297px;height:16px;line-height:16px;font-size:12px;color:#000;font-weight:400;"><span class="fit" style="--w:12;transform:scaleX(1.0000)">値</span></div>
<div class="a" style="left:627px;top:315px;width:121px;height:16px;background:#E3E3E3;border-right:1px solid #000;border-bottom:1px solid #000;box-sizing:border-box;box-shadow:inset 1px 1px 0 #FFFFFF,inset -1px -1px 0 #A0A0A0;"></div>
<div class="a" style="left:748px;top:315px;width:89px;height:16px;background:#E3E3E3;border-right:1px solid #000;border-bottom:1px solid #000;box-sizing:border-box;box-shadow:inset 1px 1px 0 #FFFFFF,inset -1px -1px 0 #A0A0A0;"></div>
<div class="a" style="left:837px;top:315px;width:300px;height:16px;background:#FFFFFF;border-bottom:1px solid #C8C8C8;box-sizing:border-box;"></div>
<div class="a t" style="left:668.0px;top:314px;height:16px;line-height:16px;font-size:12px;color:#000;font-weight:400;"><span class="fit" style="--w:38;transform:scaleX(0.7917)">タイトル</span></div>
<div class="a t" style="left:777.0px;top:314px;height:16px;line-height:16px;font-size:12px;color:#000;font-weight:400;"><span class="fit" style="--w:30;transform:scaleX(1.5012)">-----</span></div>
<div class="a t" style="left:846px;top:314px;height:16px;line-height:16px;font-size:12px;color:#000;font-weight:400;"><span class="fit" style="--w:285;transform:scaleX(0.9457)">H29道路橋示方書に基づく道路橋の設計計算例　R7基準</span></div>
<div class="a" style="left:627px;top:331px;width:121px;height:16px;background:#E3E3E3;border-right:1px solid #000;border-bottom:1px solid #000;box-sizing:border-box;box-shadow:inset 1px 1px 0 #FFFFFF,inset -1px -1px 0 #A0A0A0;"></div>
<div class="a" style="left:748px;top:331px;width:89px;height:16px;background:#E3E3E3;border-right:1px solid #000;border-bottom:1px solid #000;box-sizing:border-box;box-shadow:inset 1px 1px 0 #FFFFFF,inset -1px -1px 0 #A0A0A0;"></div>
<div class="a" style="left:837px;top:331px;width:300px;height:16px;background:#FFFFFF;border-bottom:1px solid #C8C8C8;box-sizing:border-box;"></div>
<div class="a t" style="left:669.0px;top:330px;height:16px;line-height:16px;font-size:12px;color:#000;font-weight:400;"><span class="fit" style="--w:36;transform:scaleX(0.7500)">コメント</span></div>
<div class="a t" style="left:777.0px;top:330px;height:16px;line-height:16px;font-size:12px;color:#000;font-weight:400;"><span class="fit" style="--w:30;transform:scaleX(1.5012)">-----</span></div>
<div class="a t" style="left:962.5px;top:330px;height:16px;line-height:16px;font-size:12px;color:#000;font-weight:400;"><span class="fit" style="--w:49;transform:scaleX(1.0208)">直接基礎</span></div>
<div class="a" style="left:627px;top:347px;width:121px;height:16px;background:#E3E3E3;border-right:1px solid #000;border-bottom:1px solid #000;box-sizing:border-box;box-shadow:inset 1px 1px 0 #FFFFFF,inset -1px -1px 0 #A0A0A0;"></div>
<div class="a" style="left:748px;top:347px;width:89px;height:16px;background:#E3E3E3;border-right:1px solid #000;border-bottom:1px solid #000;box-sizing:border-box;box-shadow:inset 1px 1px 0 #FFFFFF,inset -1px -1px 0 #A0A0A0;"></div>
<div class="a" style="left:837px;top:347px;width:300px;height:16px;background:#FFFFFF;border-bottom:1px solid #C8C8C8;box-sizing:border-box;"></div>
<div class="a t" style="left:670.5px;top:346px;height:16px;line-height:16px;font-size:12px;color:#000;font-weight:400;"><span class="fit" style="--w:33;transform:scaleX(0.9701)">斜角 θ</span></div>
<div class="a t" style="left:784px;top:345px;height:16px;line-height:16px;font-size:12px;color:#000;font-weight:400;"><span class="fit" style="--w:6;transform:scaleX(1.2468)">°</span></div>
<div class="a t" style="left:969.5px;top:346px;height:16px;line-height:16px;font-size:12px;color:#000;font-weight:400;"><span class="fit" style="--w:35;transform:scaleX(0.9536)">90.000</span></div>
<div class="a" style="left:627px;top:363px;width:121px;height:16px;background:#E3E3E3;border-right:1px solid #000;border-bottom:1px solid #000;box-sizing:border-box;box-shadow:inset 1px 1px 0 #FFFFFF,inset -1px -1px 0 #A0A0A0;"></div>
<div class="a" style="left:748px;top:363px;width:89px;height:16px;background:#E3E3E3;border-right:1px solid #000;border-bottom:1px solid #000;box-sizing:border-box;box-shadow:inset 1px 1px 0 #FFFFFF,inset -1px -1px 0 #A0A0A0;"></div>
<div class="a" style="left:837px;top:363px;width:300px;height:16px;background:#FFFFFF;border-bottom:1px solid #C8C8C8;box-sizing:border-box;"></div>
<div class="a t" style="left:635.5px;top:362px;height:16px;line-height:16px;font-size:12px;color:#000;font-weight:400;"><span class="fit" style="--w:103;transform:scaleX(0.9904)">設計基準強度(胸壁)</span></div>
<div class="a t" style="left:774.0px;top:362px;height:16px;line-height:16px;font-size:12px;color:#000;font-weight:400;"><span class="fit" style="--w:36;transform:scaleX(1.0000)">N/mm²</span></div>
<div class="a t" style="left:977.0px;top:362px;height:16px;line-height:16px;font-size:12px;color:#000;font-weight:400;"><span class="fit" style="--w:20;transform:scaleX(0.8562)">24.0</span></div>
<div class="a" style="left:627px;top:379px;width:121px;height:16px;background:#E3E3E3;border-right:1px solid #000;border-bottom:1px solid #000;box-sizing:border-box;box-shadow:inset 1px 1px 0 #FFFFFF,inset -1px -1px 0 #A0A0A0;"></div>
<div class="a" style="left:748px;top:379px;width:89px;height:16px;background:#E3E3E3;border-right:1px solid #000;border-bottom:1px solid #000;box-sizing:border-box;box-shadow:inset 1px 1px 0 #FFFFFF,inset -1px -1px 0 #A0A0A0;"></div>
<div class="a" style="left:837px;top:379px;width:300px;height:16px;background:#FFFFFF;border-bottom:1px solid #C8C8C8;box-sizing:border-box;"></div>
<div class="a t" style="left:635.5px;top:378px;height:16px;line-height:16px;font-size:12px;color:#000;font-weight:400;"><span class="fit" style="--w:103;transform:scaleX(0.9904)">設計基準強度(竪壁)</span></div>
<div class="a t" style="left:774.0px;top:378px;height:16px;line-height:16px;font-size:12px;color:#000;font-weight:400;"><span class="fit" style="--w:36;transform:scaleX(1.0000)">N/mm²</span></div>
<div class="a t" style="left:977.0px;top:378px;height:16px;line-height:16px;font-size:12px;color:#000;font-weight:400;"><span class="fit" style="--w:20;transform:scaleX(0.8562)">24.0</span></div>
<div class="a" style="left:627px;top:395px;width:121px;height:16px;background:#E3E3E3;border-right:1px solid #000;border-bottom:1px solid #000;box-sizing:border-box;box-shadow:inset 1px 1px 0 #FFFFFF,inset -1px -1px 0 #A0A0A0;"></div>
<div class="a" style="left:748px;top:395px;width:89px;height:16px;background:#E3E3E3;border-right:1px solid #000;border-bottom:1px solid #000;box-sizing:border-box;box-shadow:inset 1px 1px 0 #FFFFFF,inset -1px -1px 0 #A0A0A0;"></div>
<div class="a" style="left:837px;top:395px;width:300px;height:16px;background:#FFFFFF;border-bottom:1px solid #C8C8C8;box-sizing:border-box;"></div>
<div class="a t" style="left:635.5px;top:394px;height:16px;line-height:16px;font-size:12px;color:#000;font-weight:400;"><span class="fit" style="--w:103;transform:scaleX(0.9904)">設計基準強度(底版)</span></div>
<div class="a t" style="left:774.0px;top:394px;height:16px;line-height:16px;font-size:12px;color:#000;font-weight:400;"><span class="fit" style="--w:36;transform:scaleX(1.0000)">N/mm²</span></div>
<div class="a t" style="left:977.0px;top:394px;height:16px;line-height:16px;font-size:12px;color:#000;font-weight:400;"><span class="fit" style="--w:20;transform:scaleX(0.8562)">24.0</span></div>
<div class="a" style="left:627px;top:411px;width:121px;height:16px;background:#E3E3E3;border-right:1px solid #000;border-bottom:1px solid #000;box-sizing:border-box;box-shadow:inset 1px 1px 0 #FFFFFF,inset -1px -1px 0 #A0A0A0;"></div>
<div class="a" style="left:748px;top:411px;width:89px;height:16px;background:#E3E3E3;border-right:1px solid #000;border-bottom:1px solid #000;box-sizing:border-box;box-shadow:inset 1px 1px 0 #FFFFFF,inset -1px -1px 0 #A0A0A0;"></div>
<div class="a" style="left:837px;top:411px;width:300px;height:16px;background:#FFFFFF;border-bottom:1px solid #C8C8C8;box-sizing:border-box;"></div>
<div class="a t" style="left:639.0px;top:410px;height:16px;line-height:16px;font-size:12px;color:#000;font-weight:400;"><span class="fit" style="--w:96;transform:scaleX(1.0435)">鉄筋材質　(胸壁)</span></div>
<div class="a t" style="left:970.0px;top:410px;height:16px;line-height:16px;font-size:12px;color:#000;font-weight:400;"><span class="fit" style="--w:34;transform:scaleX(0.9264)">SD345</span></div>
<div class="a" style="left:627px;top:427px;width:121px;height:16px;background:#E3E3E3;border-right:1px solid #000;border-bottom:1px solid #000;box-sizing:border-box;box-shadow:inset 1px 1px 0 #FFFFFF,inset -1px -1px 0 #A0A0A0;"></div>
<div class="a" style="left:748px;top:427px;width:89px;height:16px;background:#E3E3E3;border-right:1px solid #000;border-bottom:1px solid #000;box-sizing:border-box;box-shadow:inset 1px 1px 0 #FFFFFF,inset -1px -1px 0 #A0A0A0;"></div>
<div class="a" style="left:837px;top:427px;width:300px;height:16px;background:#FFFFFF;border-bottom:1px solid #C8C8C8;box-sizing:border-box;"></div>
<div class="a t" style="left:639.0px;top:426px;height:16px;line-height:16px;font-size:12px;color:#000;font-weight:400;"><span class="fit" style="--w:96;transform:scaleX(1.0435)">鉄筋材質　(竪壁)</span></div>
<div class="a t" style="left:970.0px;top:426px;height:16px;line-height:16px;font-size:12px;color:#000;font-weight:400;"><span class="fit" style="--w:34;transform:scaleX(0.9264)">SD345</span></div>
<div class="a" style="left:627px;top:443px;width:121px;height:16px;background:#E3E3E3;border-right:1px solid #000;border-bottom:1px solid #000;box-sizing:border-box;box-shadow:inset 1px 1px 0 #FFFFFF,inset -1px -1px 0 #A0A0A0;"></div>
<div class="a" style="left:748px;top:443px;width:89px;height:16px;background:#E3E3E3;border-right:1px solid #000;border-bottom:1px solid #000;box-sizing:border-box;box-shadow:inset 1px 1px 0 #FFFFFF,inset -1px -1px 0 #A0A0A0;"></div>
<div class="a" style="left:837px;top:443px;width:300px;height:16px;background:#FFFFFF;border-bottom:1px solid #C8C8C8;box-sizing:border-box;"></div>
<div class="a t" style="left:639.0px;top:442px;height:16px;line-height:16px;font-size:12px;color:#000;font-weight:400;"><span class="fit" style="--w:96;transform:scaleX(1.0435)">鉄筋材質　(底版)</span></div>
<div class="a t" style="left:970.0px;top:442px;height:16px;line-height:16px;font-size:12px;color:#000;font-weight:400;"><span class="fit" style="--w:34;transform:scaleX(0.9264)">SD345</span></div>
<div class="a" style="left:627px;top:459px;width:121px;height:16px;background:#E3E3E3;border-right:1px solid #000;border-bottom:1px solid #000;box-sizing:border-box;box-shadow:inset 1px 1px 0 #FFFFFF,inset -1px -1px 0 #A0A0A0;"></div>
<div class="a" style="left:748px;top:459px;width:89px;height:16px;background:#E3E3E3;border-right:1px solid #000;border-bottom:1px solid #000;box-sizing:border-box;box-shadow:inset 1px 1px 0 #FFFFFF,inset -1px -1px 0 #A0A0A0;"></div>
<div class="a" style="left:837px;top:459px;width:300px;height:16px;background:#FFFFFF;border-bottom:1px solid #C8C8C8;box-sizing:border-box;"></div>
<div class="a t" style="left:663.5px;top:458px;height:16px;line-height:16px;font-size:12px;color:#000;font-weight:400;"><span class="fit" style="--w:47;transform:scaleX(0.9792)">基礎形式</span></div>
<div class="a t" style="left:962.5px;top:458px;height:16px;line-height:16px;font-size:12px;color:#000;font-weight:400;"><span class="fit" style="--w:49;transform:scaleX(1.0208)">直接基礎</span></div>
<div class="a" style="left:1px;top:672px;width:1157px;height:3px;background:#F0F0F0;"></div>
<div class="a" style="left:1px;top:673px;width:1157px;height:2px;background:#FFFFFF;"></div>
<div class="a" style="left:1px;top:675px;width:1157px;height:1px;background:#A0A0A0;"></div>
<div class="a" style="left:1px;top:676px;width:1157px;height:16px;background:#F0F0F0;border-radius:0 0 8px 8px;"></div>
<svg style="left:1144px;top:680px" width="13" height="12" viewBox="0 0 13 12"><path d="M2 12 L13 1 M6 12 L13 5 M10 12 L13 9" stroke="#A0A0A0" stroke-width="1.2"/><path d="M3 12 L13 2 M7 12 L13 6" stroke="#FFFFFF" stroke-width="0.8"/></svg>
<script>
(function(){try{var s=document.querySelectorAll('.fit');var i,e,w,n;var T=[];for(i=0;i<s.length;i++){s[i].style.transform='none';}for(i=0;i<s.length;i++){e=s[i];w=parseFloat(e.style.getPropertyValue('--w'));n=e.getBoundingClientRect().width;T.push(n>0?'scaleX('+(w/n)+')':'');}for(i=0;i<s.length;i++){if(T[i])s[i].style.transform=T[i];}}catch(x){}})();
</script>
</body></html>
